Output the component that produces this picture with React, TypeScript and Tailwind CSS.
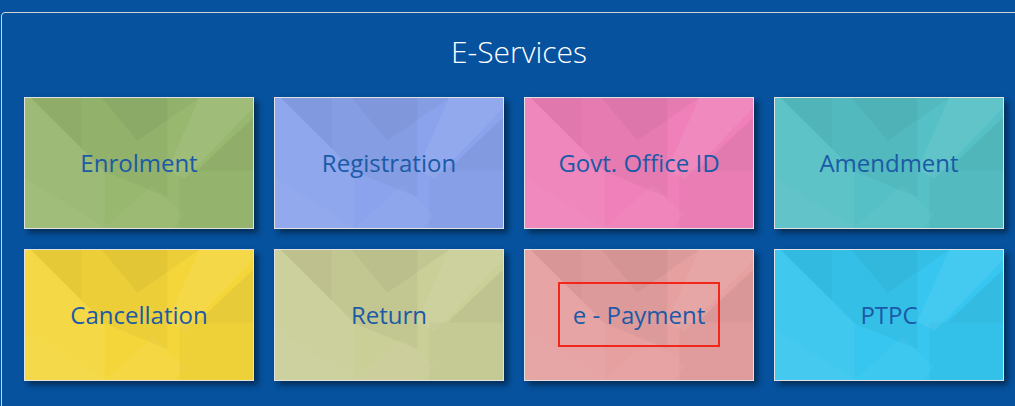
import React from "react";

type Tile = { label: string; bg: string; mark?: boolean };

const tiles: Tile[] = [
  { label: "Enrolment", bg: "bg-[#98b86f]" },
  { label: "Registration", bg: "bg-[#8aa3ec]" },
  { label: "Govt. Office ID", bg: "bg-[#ef80b9]" },
  { label: "Amendment", bg: "bg-[#55c0c5]" },
  { label: "Cancellation", bg: "bg-[#f4d63b]" },
  { label: "Return", bg: "bg-[#cace97]" },
  { label: "e - Payment", bg: "bg-[#e6a0a0]", mark: true },
  { label: "PTPC", bg: "bg-[#36c6ef]" },
];

function Pattern() {
  return (
    <svg
      className="absolute inset-0 h-full w-full"
      viewBox="0 0 229 131"
      preserveAspectRatio="none"
    >
      <polygon points="0,0 6,0 80,74 80,131 0,131" fill="#fff" fillOpacity="0.05" />
      <polygon points="6,0 57,0 57,51" fill="#000" fillOpacity="0.06" />
      <polygon points="57,0 143,0 143,100 80,74 57,51" fill="#000" fillOpacity="0.035" />
      <polygon points="77,0 175,0 113,43" fill="#000" fillOpacity="0.035" />
      <polygon points="175,0 229,0 229,10 160,82 143,72" fill="#fff" fillOpacity="0.07" />
      <polygon points="173,73 229,73 229,20 200,47" fill="#000" fillOpacity="0.05" />
      <polygon points="155,73 229,73 229,131 155,131" fill="#000" fillOpacity="0.025" />
      <polygon points="80,131 128,88 160,118 148,131" fill="#fff" fillOpacity="0.04" />
      <polygon points="0,80 80,131 0,131" fill="#fff" fillOpacity="0.03" />
    </svg>
  );
}

export default function App() {
  return (
    <div
      className="h-[406px] w-[1015px] overflow-hidden bg-[#06529e] pt-[12px] pl-[1px]"
      style={{ fontFamily: '"Open Sans", "Noto Sans", sans-serif' }}
    >
      <div className="h-[420px] w-[1030px] rounded-tl-[4px] border border-[#d4d4d4] bg-[#06529e]">
        <div className="flex h-[84px] items-center justify-center pb-[6px] pl-[6px]">
          <h1 className="text-[30px] font-light leading-none text-white">E-Services</h1>
        </div>
        <div className="grid grid-cols-[230px_230px_230px_230px] gap-x-[20px] gap-y-[20px] pl-[22px]">
          {tiles.map((t) => (
            <div
              key={t.label}
              className={`relative flex h-[132px] items-center justify-center overflow-hidden border border-[#e2e2e2] pb-[2px] ${t.bg} shadow-[4px_4px_6px_rgba(0,0,0,0.45)]`}
            >
              <Pattern />
              {t.mark ? (
                <span className="relative border-[2.5px] border-[#f2261a] px-[13px] py-[14px] text-[24px] leading-[33px] text-[#1b5aa6]">
                  {t.label}
                </span>
              ) : (
                <span className="relative text-[24px] leading-[33px] text-[#1b5aa6]">{t.label}</span>
              )}
            </div>
          ))}
        </div>
      </div>
    </div>
  );
}
